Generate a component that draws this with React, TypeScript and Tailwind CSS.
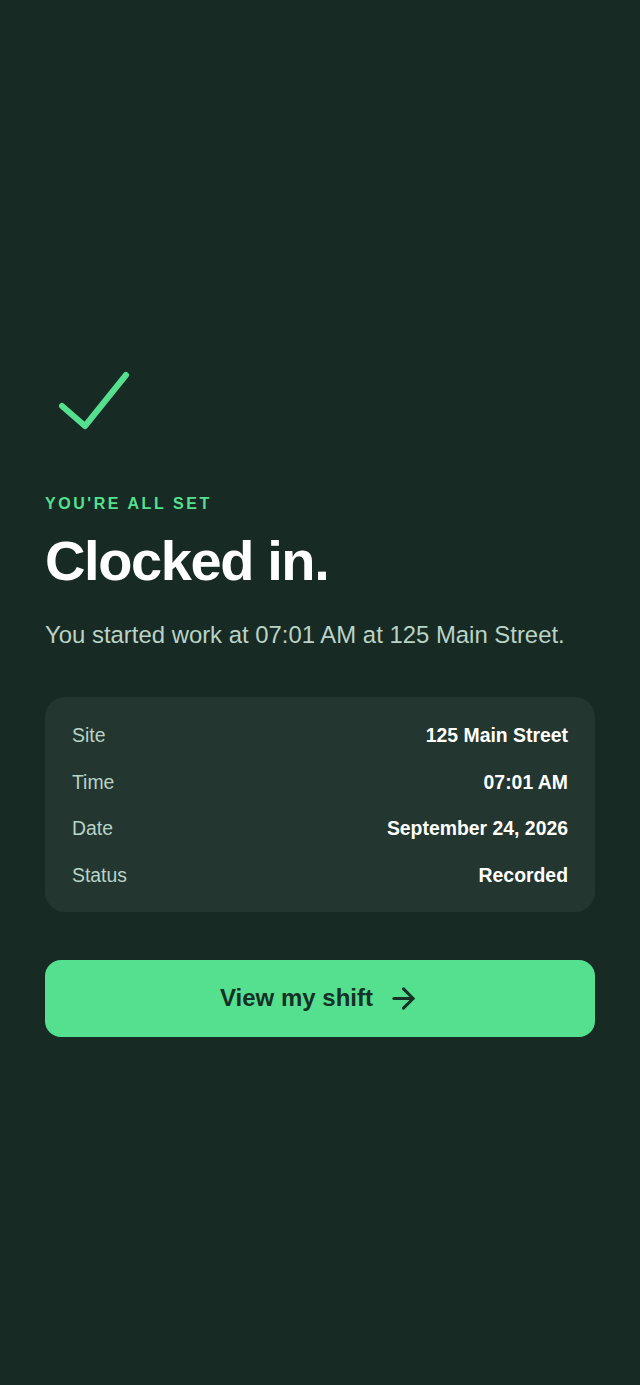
import { ArrowRight } from 'lucide-react';

const rows = [
  { label: 'Site', value: '125 Main Street' },
  { label: 'Time', value: '07:01 AM' },
  { label: 'Date', value: 'September 24, 2026' },
  { label: 'Status', value: 'Recorded' },
];

export default function App() {
  return (
    <div
      className="min-h-screen bg-[#172a23] flex flex-col px-[45px] pt-[371px]"
      style={{ fontFamily: '"Liberation Sans", Arial, sans-serif' }}
    >
      {/* Check mark */}
      <svg width="72" height="60" viewBox="0 0 72 60" fill="none" className="ml-[13px]">
        <path
          d="M4 35 L27 55 L68 4"
          stroke="#55e090"
          strokeWidth="6"
          strokeLinecap="round"
          strokeLinejoin="round"
        />
      </svg>

      <p className="mt-[65px] text-[16px] font-bold tracking-[0.16em] text-[#55e090] leading-none">
        YOU&apos;RE ALL SET
      </p>
      <h1 className="mt-[17px] text-[56px] font-bold tracking-[-0.025em] text-white leading-[64px]">
        Clocked in.
      </h1>
      <p className="mt-[26px] text-[23.9px] text-[#b9d3c6] leading-[32px]">
        You started work at 07:01 AM at 125 Main Street.
      </p>

      {/* Details card */}
      <div className="mt-[46px] rounded-[20px] bg-[#233630] px-[27px] pt-[25px] pb-[22px] flex flex-col gap-[18.5px]">
        {rows.map((r) => (
          <div key={r.label} className="flex items-center justify-between h-[28px]">
            <span className="text-[19.4px] text-[#b9d3c6]">{r.label}</span>
            <span className="text-[19.4px] font-bold text-white">{r.value}</span>
          </div>
        ))}
      </div>

      <button className="mt-[48px] h-[77px] w-full rounded-[16px] bg-[#55e090] flex items-center justify-center gap-[14px] text-[24px] font-bold text-[#163026]">
        View my shift
        <ArrowRight className="w-[33px] h-[33px]" strokeWidth={2.2} />
      </button>
    </div>
  );
}
